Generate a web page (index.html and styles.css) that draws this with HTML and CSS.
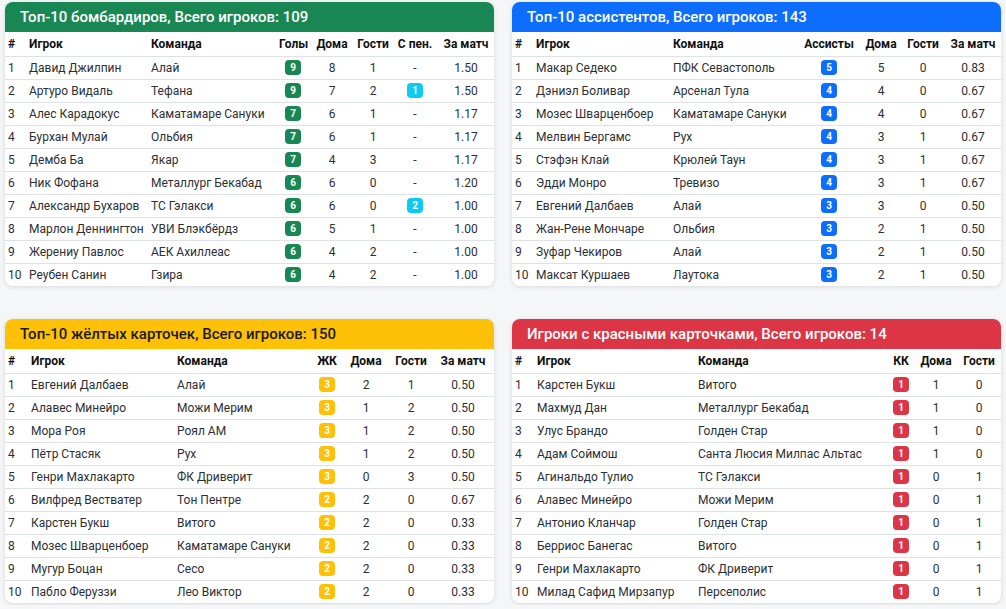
FILE: index.html
```html
<!DOCTYPE html>
<html lang="ru">
<head>
<meta charset="utf-8">
<title>Статистика игроков</title>
<link rel="stylesheet" href="styles.css">
</head>
<body>
<main class="grid">
  <section class="card">
    <div class="card-header hd-green">Топ-10 бомбардиров, Всего игроков: 109</div>
    <table class="stats">
      <colgroup><col class="c-num n1"><col class="c-pl p1"><col class="c-tm"><col class="c-s1"><col class="c-s2"><col class="c-s3"><col class="c-s4"><col class="c-s5"></colgroup>
      <thead><tr><th>#</th><th>Игрок</th><th>Команда</th><th class="ct">Голы</th><th class="ct">Дома</th><th class="ct">Гости</th><th class="ct">С пен.</th><th class="ct">За матч</th></tr></thead>
      <tbody>
        <tr><td>1</td><td>Давид Джилпин</td><td>Алай</td><td class="ct"><span class="badge b-green">9</span></td><td class="ct">8</td><td class="ct">1</td><td class="ct">-</td><td class="ct">1.50</td></tr>
        <tr><td>2</td><td>Артуро Видаль</td><td>Тефана</td><td class="ct"><span class="badge b-green">9</span></td><td class="ct">7</td><td class="ct">2</td><td class="ct"><span class="badge b-info">1</span></td><td class="ct">1.50</td></tr>
        <tr><td>3</td><td>Алес Карадокус</td><td>Каматамаре Сануки</td><td class="ct"><span class="badge b-green">7</span></td><td class="ct">6</td><td class="ct">1</td><td class="ct">-</td><td class="ct">1.17</td></tr>
        <tr><td>4</td><td>Бурхан Мулай</td><td>Ольбия</td><td class="ct"><span class="badge b-green">7</span></td><td class="ct">6</td><td class="ct">1</td><td class="ct">-</td><td class="ct">1.17</td></tr>
        <tr><td>5</td><td>Дембa Ба</td><td>Якар</td><td class="ct"><span class="badge b-green">7</span></td><td class="ct">4</td><td class="ct">3</td><td class="ct">-</td><td class="ct">1.17</td></tr>
        <tr><td>6</td><td>Ник Фофана</td><td>Металлург Бекабад</td><td class="ct"><span class="badge b-green">6</span></td><td class="ct">6</td><td class="ct">0</td><td class="ct">-</td><td class="ct">1.20</td></tr>
        <tr><td>7</td><td>Александр Бухаров</td><td>ТС Гэлакси</td><td class="ct"><span class="badge b-green">6</span></td><td class="ct">6</td><td class="ct">0</td><td class="ct"><span class="badge b-info">2</span></td><td class="ct">1.00</td></tr>
        <tr><td>8</td><td>Марлон Деннингтон</td><td>УВИ Блэкбёрдз</td><td class="ct"><span class="badge b-green">6</span></td><td class="ct">5</td><td class="ct">1</td><td class="ct">-</td><td class="ct">1.00</td></tr>
        <tr><td>9</td><td>Жерениу Павлос</td><td>АЕК Ахиллеас</td><td class="ct"><span class="badge b-green">6</span></td><td class="ct">4</td><td class="ct">2</td><td class="ct">-</td><td class="ct">1.00</td></tr>
        <tr><td>10</td><td>Реубен Санин</td><td>Гзира</td><td class="ct"><span class="badge b-green">6</span></td><td class="ct">4</td><td class="ct">2</td><td class="ct">-</td><td class="ct">1.00</td></tr>
      </tbody>
    </table>
  </section>

  <section class="card">
    <div class="card-header hd-blue">Топ-10 ассистентов, Всего игроков: 143</div>
    <table class="stats">
      <colgroup><col class="c-num n1"><col class="c-pl p2"><col class="c-tm"><col class="a-s1"><col class="a-s2"><col class="a-s3"><col class="a-s4"></colgroup>
      <thead><tr><th>#</th><th>Игрок</th><th>Команда</th><th class="ct">Ассисты</th><th class="ct">Дома</th><th class="ct">Гости</th><th class="ct">За матч</th></tr></thead>
      <tbody>
        <tr><td>1</td><td>Макар Седеко</td><td>ПФК Севастополь</td><td class="ct"><span class="badge b-blue">5</span></td><td class="ct">5</td><td class="ct">0</td><td class="ct">0.83</td></tr>
        <tr><td>2</td><td>Дэниэл Боливар</td><td>Арсенал Тула</td><td class="ct"><span class="badge b-blue">4</span></td><td class="ct">4</td><td class="ct">0</td><td class="ct">0.67</td></tr>
        <tr><td>3</td><td>Мозес Шварценбоер</td><td>Каматамаре Сануки</td><td class="ct"><span class="badge b-blue">4</span></td><td class="ct">4</td><td class="ct">0</td><td class="ct">0.67</td></tr>
        <tr><td>4</td><td>Мелвин Бергамс</td><td>Рух</td><td class="ct"><span class="badge b-blue">4</span></td><td class="ct">3</td><td class="ct">1</td><td class="ct">0.67</td></tr>
        <tr><td>5</td><td>Стэфэн Клай</td><td>Крюлей Таун</td><td class="ct"><span class="badge b-blue">4</span></td><td class="ct">3</td><td class="ct">1</td><td class="ct">0.67</td></tr>
        <tr><td>6</td><td>Эдди Монро</td><td>Тревизо</td><td class="ct"><span class="badge b-blue">4</span></td><td class="ct">3</td><td class="ct">1</td><td class="ct">0.67</td></tr>
        <tr><td>7</td><td>Евгений Далбаев</td><td>Алай</td><td class="ct"><span class="badge b-blue">3</span></td><td class="ct">3</td><td class="ct">0</td><td class="ct">0.50</td></tr>
        <tr><td>8</td><td>Жан-Рене Мончаре</td><td>Ольбия</td><td class="ct"><span class="badge b-blue">3</span></td><td class="ct">2</td><td class="ct">1</td><td class="ct">0.50</td></tr>
        <tr><td>9</td><td>Зуфар Чекиров</td><td>Алай</td><td class="ct"><span class="badge b-blue">3</span></td><td class="ct">2</td><td class="ct">1</td><td class="ct">0.50</td></tr>
        <tr><td>10</td><td>Максат Куршаев</td><td>Лаутока</td><td class="ct"><span class="badge b-blue">3</span></td><td class="ct">2</td><td class="ct">1</td><td class="ct">0.50</td></tr>
      </tbody>
    </table>
  </section>

  <section class="card">
    <div class="card-header hd-yellow">Топ-10 жёлтых карточек, Всего игроков: 150</div>
    <table class="stats">
      <colgroup><col class="c-num n3"><col class="c-pl p3"><col class="c-tm"><col class="y-s1"><col class="y-s2"><col class="y-s3"><col class="y-s4"></colgroup>
      <thead><tr><th>#</th><th>Игрок</th><th>Команда</th><th class="ct">ЖК</th><th class="ct">Дома</th><th class="ct">Гости</th><th class="ct">За матч</th></tr></thead>
      <tbody>
        <tr><td>1</td><td>Евгений Далбаев</td><td>Алай</td><td class="ct"><span class="badge b-yellow">3</span></td><td class="ct">2</td><td class="ct">1</td><td class="ct">0.50</td></tr>
        <tr><td>2</td><td>Алавес Минейро</td><td>Можи Мерим</td><td class="ct"><span class="badge b-yellow">3</span></td><td class="ct">1</td><td class="ct">2</td><td class="ct">0.50</td></tr>
        <tr><td>3</td><td>Мора Роя</td><td>Роял АМ</td><td class="ct"><span class="badge b-yellow">3</span></td><td class="ct">1</td><td class="ct">2</td><td class="ct">0.50</td></tr>
        <tr><td>4</td><td>Пётр Стасяк</td><td>Рух</td><td class="ct"><span class="badge b-yellow">3</span></td><td class="ct">1</td><td class="ct">2</td><td class="ct">0.50</td></tr>
        <tr><td>5</td><td>Генри Махлакарто</td><td>ФК Дриверит</td><td class="ct"><span class="badge b-yellow">3</span></td><td class="ct">0</td><td class="ct">3</td><td class="ct">0.50</td></tr>
        <tr><td>6</td><td>Вилфред Вестватер</td><td>Тон Пентре</td><td class="ct"><span class="badge b-yellow">2</span></td><td class="ct">2</td><td class="ct">0</td><td class="ct">0.67</td></tr>
        <tr><td>7</td><td>Карстен Букш</td><td>Витого</td><td class="ct"><span class="badge b-yellow">2</span></td><td class="ct">2</td><td class="ct">0</td><td class="ct">0.33</td></tr>
        <tr><td>8</td><td>Мозес Шварценбоер</td><td>Каматамаре Сануки</td><td class="ct"><span class="badge b-yellow">2</span></td><td class="ct">2</td><td class="ct">0</td><td class="ct">0.33</td></tr>
        <tr><td>9</td><td>Мугур Боцан</td><td>Сесо</td><td class="ct"><span class="badge b-yellow">2</span></td><td class="ct">2</td><td class="ct">0</td><td class="ct">0.33</td></tr>
        <tr><td>10</td><td>Пабло Феруззи</td><td>Лео Виктор</td><td class="ct"><span class="badge b-yellow">2</span></td><td class="ct">2</td><td class="ct">0</td><td class="ct">0.33</td></tr>
      </tbody>
    </table>
  </section>

  <section class="card">
    <div class="card-header hd-red">Игроки с красными карточками, Всего игроков: 14</div>
    <table class="stats">
      <colgroup><col class="c-num n4"><col class="c-pl p4"><col class="c-tm"><col class="r-s1"><col class="r-s2"><col class="r-s3"></colgroup>
      <thead><tr><th>#</th><th>Игрок</th><th>Команда</th><th class="ct">КК</th><th class="ct">Дома</th><th class="ct">Гости</th></tr></thead>
      <tbody>
        <tr><td>1</td><td>Карстен Букш</td><td>Витого</td><td class="ct"><span class="badge b-red">1</span></td><td class="ct">1</td><td class="ct">0</td></tr>
        <tr><td>2</td><td>Махмуд Дан</td><td>Металлург Бекабад</td><td class="ct"><span class="badge b-red">1</span></td><td class="ct">1</td><td class="ct">0</td></tr>
        <tr><td>3</td><td>Улус Брандо</td><td>Голден Стар</td><td class="ct"><span class="badge b-red">1</span></td><td class="ct">1</td><td class="ct">0</td></tr>
        <tr><td>4</td><td>Адам Соймош</td><td>Санта Люсия Милпас Альтас</td><td class="ct"><span class="badge b-red">1</span></td><td class="ct">1</td><td class="ct">0</td></tr>
        <tr><td>5</td><td>Агинальдо Тулио</td><td>ТС Гэлакси</td><td class="ct"><span class="badge b-red">1</span></td><td class="ct">0</td><td class="ct">1</td></tr>
        <tr><td>6</td><td>Алавес Минейро</td><td>Можи Мерим</td><td class="ct"><span class="badge b-red">1</span></td><td class="ct">0</td><td class="ct">1</td></tr>
        <tr><td>7</td><td>Антонио Кланчар</td><td>Голден Стар</td><td class="ct"><span class="badge b-red">1</span></td><td class="ct">0</td><td class="ct">1</td></tr>
        <tr><td>8</td><td>Берриос Банегас</td><td>Витого</td><td class="ct"><span class="badge b-red">1</span></td><td class="ct">0</td><td class="ct">1</td></tr>
        <tr><td>9</td><td>Генри Махлакарто</td><td>ФК Дриверит</td><td class="ct"><span class="badge b-red">1</span></td><td class="ct">0</td><td class="ct">1</td></tr>
        <tr><td>10</td><td>Милад Сафид Мирзапур</td><td>Персеполис</td><td class="ct"><span class="badge b-red">1</span></td><td class="ct">0</td><td class="ct">1</td></tr>
      </tbody>
    </table>
  </section>
</main>
</body>
</html>
```

FILE: styles.css
```css
* { box-sizing: border-box; }

body {
  margin: 0;
  background: #f5f6f8;
  font-family: Roboto, "Noto Sans", sans-serif;
  color: #212529;
}

.grid {
  display: grid;
  grid-template-columns: 489px 489px;
  column-gap: 18px;
  row-gap: 33px;
  padding: 2px 5px;
}

.card {
  background: #fff;
  border-radius: 8px;
  box-shadow: 0 1px 5px rgba(0, 0, 0, 0.12);
  overflow: hidden;
}

.card-header {
  height: 30px;
  line-height: 30px;
  padding: 0 15px;
  font-size: 15px;
  font-weight: 500;
  color: #fff;
  white-space: nowrap;
}

.hd-green { background: #198754; }
.hd-blue { background: #0d6efd; }
.hd-yellow { background: #ffc107; color: #1a1a1a; }
.hd-red { background: #dc3545; }

.stats {
  width: 100%;
  table-layout: fixed;
  border-collapse: collapse;
  font-size: 12px;
}

.stats th,
.stats td {
  padding: 0 3px;
  text-align: left;
  white-space: nowrap;
}

.stats th {
  height: 24px;
  font-weight: 700;
  color: #111;
}

.stats td {
  height: 23px;
  border-top: 1px solid #dee2e6;
  color: #2b2f33;
}

.stats .ct { text-align: center; }

/* column widths: top scorers */
.n1 { width: 21px; }
.p1 { width: 122px; }
.c-s1 { width: 34px; }
.c-s2 { width: 44px; }
.c-s3 { width: 38px; }
.c-s4 { width: 46px; }
.c-s5 { width: 56px; }

/* assists */
.p2 { width: 137px; }
.a-s1 { width: 64px; }
.a-s2 { width: 40px; }
.a-s3 { width: 44px; }
.a-s4 { width: 56px; }

/* yellow cards */
.n3 { width: 23px; }
.p3 { width: 146px; }
.y-s1 { width: 30px; }
.y-s2 { width: 48px; }
.y-s3 { width: 42px; }
.y-s4 { width: 62px; }

/* red cards */
.n4 { width: 22px; }
.p4 { width: 161px; }
.r-s1 { width: 28px; }
.r-s2 { width: 42px; }
.r-s3 { width: 44px; }

.badge {
  display: inline-block;
  min-width: 16px;
  height: 15px;
  line-height: 15px;
  padding: 0 4px;
  border-radius: 4px;
  font-size: 10px;
  font-weight: 700;
  color: #fff;
  text-align: center;
  vertical-align: middle;
}

.b-green { background: #198754; }
.b-info { background: #0dcaf0; }
.b-blue { background: #0d6efd; }
.b-yellow { background: #ffc107; }
.b-red { background: #dc3545; }
```
